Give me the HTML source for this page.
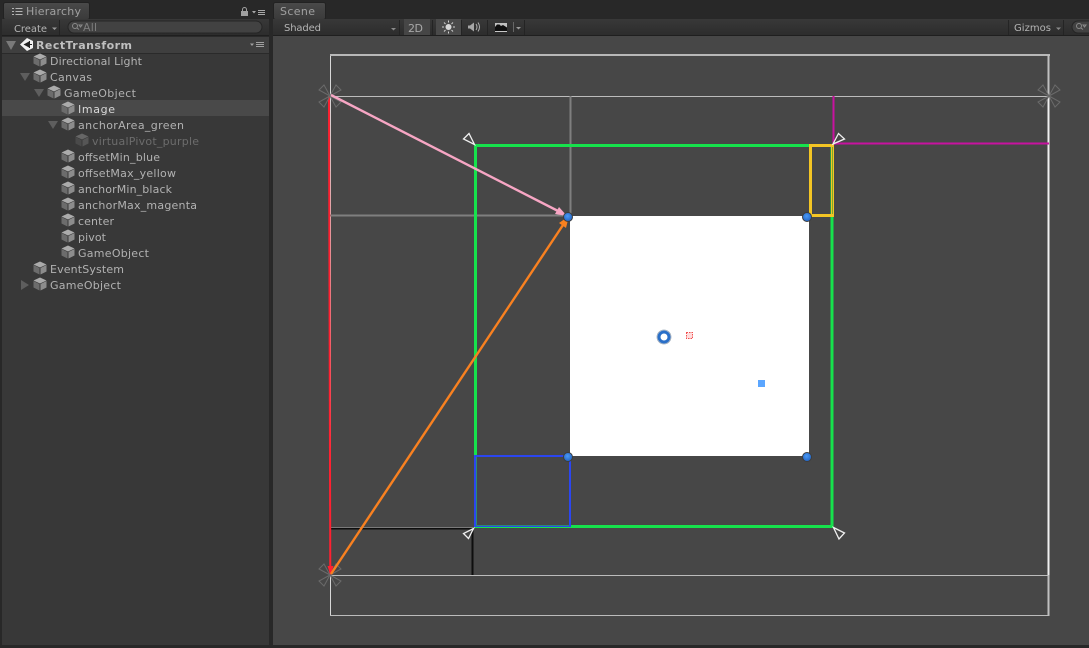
<!DOCTYPE html>
<html><head><meta charset="utf-8"><style>
html,body{margin:0;padding:0;background:#282828;width:1089px;height:648px;overflow:hidden}
svg{display:block}
text{font-family:"DejaVu Sans","Liberation Sans",sans-serif;font-size:11px;fill:#b4b4b4}
.r{fill:#b2b2b2}
</style></head><body>
<svg width="1089" height="648" viewBox="0 0 1089 648" xmlns="http://www.w3.org/2000/svg">
<defs>
<linearGradient id="tb" x1="0" y1="0" x2="0" y2="1"><stop offset="0" stop-color="#383838"/><stop offset="1" stop-color="#2c2c2c"/></linearGradient>
<linearGradient id="tab" x1="0" y1="0" x2="0" y2="1"><stop offset="0" stop-color="#4a4a4a"/><stop offset="1" stop-color="#3a3a3a"/></linearGradient>
<radialGradient id="hd" cx="0.45" cy="0.4" r="0.6"><stop offset="0" stop-color="#4a9af5"/><stop offset="1" stop-color="#2264c4"/></radialGradient>
<g id="cube"><polygon points="0,-6.500 6.500,-3.500 0,-0.500 -6.500,-3.500" fill="#ababab"/><polygon points="-6.500,-3 -0.500,0 -0.500,6.500 -6.500,3.500" fill="#6c6c6c"/><polygon points="6.500,-3 0.500,0 0.500,6.500 6.500,3.500" fill="#8c8c8c"/></g>
<g id="cubed"><polygon points="0,-6.500 6.500,-3.500 0,-0.500 -6.500,-3.500" fill="#666"/><polygon points="-6.500,-3 -0.500,0 -0.500,6.500 -6.500,3.500" fill="#4a4a4a"/><polygon points="6.500,-3 0.500,0 0.500,6.500 6.500,3.500" fill="#565656"/></g>
<g id="petal" fill="none" stroke="#6a6a6a" stroke-width="1"><path d="M0,0 L-11,-6 L-6,-11 Z"/><path d="M0,0 L11,-6 L6,-11 Z"/><path d="M0,0 L-11,6 L-6,11 Z"/><path d="M0,0 L11,6 L6,11 Z"/></g>
</defs>

<rect width="1089" height="648" fill="#282828"/>

<!-- Hierarchy panel -->
<rect x="2" y="19" width="267" height="626" fill="#383838"/>
<rect x="3.500" y="2.500" width="86" height="17" rx="2" fill="url(#tab)" stroke="#222" stroke-width="1"/>
<path d="M15.500 8.500H22.500M15.500 11.500H22.500M15.500 14.500H22.500M12 8.500h2M12 11.500h2M12 14.500h2" stroke="#b4b4b4" fill="none"/>
<text x="26" y="15" textLength="55" lengthAdjust="spacing" style="fill:#a0a0a0">Hierarchy</text>
<rect x="241" y="11" width="7" height="5" fill="#a0a0a0"/><path d="M242.500 11V9.500a2 2 0 0 1 4 0V11" fill="none" stroke="#a0a0a0"/>
<path d="M252 11h4l-2 2.500z" fill="#a8a8a8"/><path d="M258 10.500h7M258 12.500h7M258 14.500h7" stroke="#a8a8a8" fill="none"/>

<rect x="2" y="19" width="267" height="17" fill="url(#tb)"/>
<rect x="2" y="35" width="267" height="1" fill="#1f1f1f"/>
<path d="M59.500 20V35" stroke="#232323"/>
<text x="14" y="32" textLength="33" lengthAdjust="spacing" style="font-size:10px">Create</text>
<path d="M52 27.500h5l-2.500 2.500z" fill="#9a9a9a"/>
<rect x="68" y="21" width="194" height="12" rx="6" fill="#424242" stroke="#252525"/>
<circle cx="75" cy="26" r="2.500" fill="none" stroke="#8a8a8a"/><path d="M77 28l2 1.500M79 25h3l-1.500 2z" stroke="#8a8a8a" fill="none"/>
<text x="83" y="31" textLength="14" lengthAdjust="spacing" style="fill:#7e7e7e">All</text>

<!-- Scene header row -->
<rect x="2" y="37" width="267" height="16" fill="#3f3f3f"/>
<rect x="2" y="53" width="267" height="1" fill="#2a2a2a"/>
<rect x="2" y="36" width="267" height="1" fill="#2a2a2a"/>
<path d="M6 41h10l-5 9z" fill="#7a7a7a"/>
<g><polygon points="27,38 33,41 33,48 27,51 20,44.500" fill="#f2f2f2"/><path d="M23.500 44.500L29 41.500V47.500Z" fill="#222"/><path d="M26 44.500h6M29.500 41v7" stroke="#222" fill="none"/></g>
<text x="36" y="49" textLength="96" lengthAdjust="spacing" style="font-weight:bold;fill:#c0c0c0">RectTransform</text>
<path d="M250 43.500h4l-2 2.500z" fill="#a0a0a0"/><path d="M256 42.500h8M256 44.500h8M256 46.500h8" stroke="#a0a0a0" fill="none"/>

<!-- selected -->
<rect x="2" y="100" width="267" height="16" fill="#494949"/>

<!-- tree -->
<use href="#cube" x="40" y="60"/><text class="r" x="50" y="65" textLength="92" lengthAdjust="spacing">Directional Light</text>
<path d="M20 73h10l-5 8z" fill="#5e5e5e"/><use href="#cube" x="40" y="76"/><text class="r" x="50" y="81" textLength="42" lengthAdjust="spacing">Canvas</text>
<path d="M34 89h10l-5 8z" fill="#5e5e5e"/><use href="#cube" x="54" y="92"/><text class="r" x="64" y="97" textLength="72" lengthAdjust="spacing">GameObject</text>
<use href="#cube" x="68" y="108"/><text x="78" y="113" textLength="37" lengthAdjust="spacing" style="fill:#d8d8d8">Image</text>
<path d="M48 121h10l-5 8z" fill="#5e5e5e"/><use href="#cube" x="68" y="124"/><text class="r" x="78" y="129" textLength="106" lengthAdjust="spacing">anchorArea_green</text>
<use href="#cubed" x="82" y="140"/><text x="92" y="145" textLength="107" lengthAdjust="spacing" style="fill:#6c6c6c">virtualPivot_purple</text>
<use href="#cube" x="68" y="156"/><text class="r" x="78" y="161" textLength="82" lengthAdjust="spacing">offsetMin_blue</text>
<use href="#cube" x="68" y="172"/><text class="r" x="78" y="177" textLength="98" lengthAdjust="spacing">offsetMax_yellow</text>
<use href="#cube" x="68" y="188"/><text class="r" x="78" y="193" textLength="94" lengthAdjust="spacing">anchorMin_black</text>
<use href="#cube" x="68" y="204"/><text class="r" x="78" y="209" textLength="119" lengthAdjust="spacing">anchorMax_magenta</text>
<use href="#cube" x="68" y="220"/><text class="r" x="78" y="225" textLength="36" lengthAdjust="spacing">center</text>
<use href="#cube" x="68" y="236"/><text class="r" x="78" y="241" textLength="28" lengthAdjust="spacing">pivot</text>
<use href="#cube" x="68" y="252"/><text class="r" x="78" y="257" textLength="71" lengthAdjust="spacing">GameObject</text>
<use href="#cube" x="40" y="268"/><text class="r" x="50" y="273" textLength="74" lengthAdjust="spacing">EventSystem</text>
<path d="M21 280l8 5-8 5z" fill="#5e5e5e"/><use href="#cube" x="40" y="284"/><text class="r" x="50" y="289" textLength="71" lengthAdjust="spacing">GameObject</text>

<!-- Scene panel -->
<rect x="273.500" y="2.500" width="52" height="17" rx="2" fill="url(#tab)" stroke="#222"/>
<text x="280" y="15" textLength="35" lengthAdjust="spacing" style="fill:#a0a0a0">Scene</text>
<rect x="273" y="19" width="816" height="17" fill="url(#tb)"/>
<rect x="273" y="35" width="816" height="1" fill="#1f1f1f"/>
<rect x="273" y="36" width="816" height="609" fill="#474747"/>
<text x="284" y="31" textLength="37" lengthAdjust="spacing" style="font-size:10px">Shaded</text>
<path d="M391 28h5l-2.500 2.500z" fill="#8a8a8a"/>
<path d="M399.500 20V35M432.500 20V35" stroke="#242424"/>
<rect x="404" y="19" width="26" height="16" fill="#464646"/>
<text x="408" y="32" textLength="15" lengthAdjust="spacing" style="fill:#a8a8a8">2D</text>
<rect x="436" y="19" width="25" height="16" fill="#4a4a4a"/>
<path d="M461.500 20V35M487.500 20V35M524.500 20V35" stroke="#242424"/>
<circle cx="448.500" cy="27" r="3" fill="#d8d8d8"/>
<path d="M448.500 20.500v2M448.500 31.500v2M442 27h2M453 27h2M444 22.500l1.500 1.500M451.500 30l1.500 1.500M453 22.500L451.500 24M445.500 30L444 31.500" stroke="#d0d0d0" fill="none"/>
<path d="M468 25.500h2l4-3v9l-4-3h-2z" fill="#a6a6a6"/><path d="M476 24q2 3 0 6M478 22.500q3 4.500 0 9" stroke="#b0b0b0" fill="none"/>
<rect x="495" y="23" width="12" height="9" fill="#c0c0c0"/><path d="M495 31v-4l2-2.500h2.500l1.500 1.500 2-1 4 2.500v3.500z" fill="#0e0e0e"/><rect x="495" y="31" width="12" height="1" fill="#c8c8c8"/>
<path d="M513.500 22V32" stroke="#666"/>
<path d="M516 27h5l-2.500 2.500z" fill="#9a9a9a"/>
<path d="M1008.500 20V35M1063.500 20V35" stroke="#242424"/>
<text x="1014" y="31" textLength="37" lengthAdjust="spacing" style="font-size:10px">Gizmos</text>
<path d="M1056 27.500h5l-2.500 2.500z" fill="#8a8a8a"/>
<rect x="1072" y="21" width="30" height="12" rx="6" fill="#424242" stroke="#252525"/>
<circle cx="1079" cy="26" r="2.500" fill="none" stroke="#8a8a8a"/><path d="M1081 28l2 1.500M1083 25h3l-1.500 2z" stroke="#8a8a8a" fill="none"/>

<!-- Scene content -->
<g fill="none" shape-rendering="crispEdges">
<path d="M330.500 55V616" stroke="#d8d8d8"/>
<rect x="330" y="54" width="720" height="2" fill="#b8b8b8"/>
<path d="M330 96.500H1049M330 575.500H1049M330 615.500H1049" stroke="#bcbcbc"/>
<path d="M1048.500 55V616" stroke="#c0c0c0" stroke-width="2"/>
<path d="M1048.500 96V575" stroke="#f0f0f0" stroke-width="2"/>
<path d="M570.500 96V216M330 215.500H570" stroke="#7f7f7f" stroke-width="2"/>
<path d="M833.500 96V145M833 143.500H1049" stroke="#c812a0" stroke-width="2"/>
<path d="M330 528.500H473M472.500 528V575" stroke="#0e0e0e" stroke-width="2"/>
<path d="M330 527.500H473" stroke="#7a7a7a"/>
</g>
<path d="M329 96L330.300 575" stroke="#ff2030" stroke-width="2" fill="none"/>
<rect x="570" y="216" width="239" height="240" fill="#fff"/>
<g fill="none" shape-rendering="crispEdges">
<rect x="475.500" y="145.500" width="356.500" height="381" stroke="#16e24c" stroke-width="3"/>
<rect x="475" y="456" width="95" height="70" stroke="#2b46f0" stroke-width="2"/>
<path d="M476.500 457V525M476 525.500H569" stroke="#2a8a7a"/>
<rect x="810.500" y="145.500" width="22" height="70" stroke="#f4c524" stroke-width="3"/>
</g>
<path d="M832.500 147V214" stroke="#7cab2a" stroke-width="1" shape-rendering="crispEdges"/>

<!-- anchors -->
<path d="M474.500 144.500L463.500 139L469 133.500Z" fill="#474747" stroke="#f0f0f0" stroke-width="1.300"/>
<path d="M833 144L838.500 133.500L844.500 139Z" fill="#474747" stroke="#f0f0f0" stroke-width="1.300"/>
<path d="M473.500 528.500L463.500 533.500L468.500 538.500Z" fill="#474747" stroke="#f0f0f0" stroke-width="1.300"/>
<path d="M833.500 527.500L844.500 533L839 539Z" fill="#474747" stroke="#f0f0f0" stroke-width="1.300"/>

<!-- pivot/gizmo stars -->
<use href="#petal" x="330" y="96"/>
<use href="#petal" x="1049" y="96"/>
<use href="#petal" x="330" y="575"/>

<!-- arrows -->
<path d="M327.500 566h6l-3 9z" fill="#ff2030"/>
<path d="M331 95L560 212" stroke="#f7a6c4" stroke-width="2.400" fill="none"/>
<path d="M567 216L555 214L559 207Z" fill="#f7a6c4"/>
<path d="M331 574L565 222" stroke="#f98120" stroke-width="2.400" fill="none"/>
<path d="M569 216L566 228L559 223Z" fill="#f98120"/>

<!-- corner handles -->
<g>
<circle cx="568" cy="217" r="4.500" fill="url(#hd)" stroke="#3c3c3c"/>
<circle cx="807" cy="217" r="4.500" fill="url(#hd)" stroke="#3c3c3c"/>
<circle cx="568" cy="457" r="4.500" fill="url(#hd)" stroke="#3c3c3c"/>
<circle cx="807" cy="457" r="4.500" fill="url(#hd)" stroke="#3c3c3c"/>
</g>
<!-- center -->
<circle cx="664" cy="337" r="5" fill="none" stroke="#2a6fc8" stroke-width="3"/>
<circle cx="664" cy="337" r="7" fill="none" stroke="#9aa8b8" stroke-width="0.800"/>
<rect x="686.500" y="332.500" width="6" height="6" fill="#ffdcdc" stroke="#f05050" stroke-width="1" stroke-dasharray="1.500 1"/>
<rect x="758" y="380" width="7" height="7" fill="#5ba6ff"/>
<rect x="0" y="645" width="1089" height="3" fill="#282828"/>
</svg>
</body></html>
